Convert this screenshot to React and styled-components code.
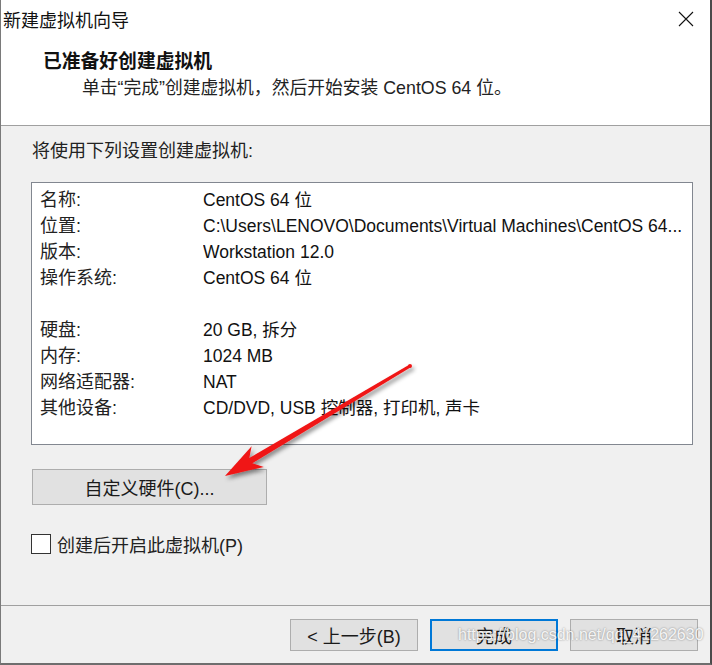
import React from 'react';
import styled, { createGlobalStyle } from 'styled-components';

const GlobalStyle = createGlobalStyle`
  html, body {
    margin: 0;
    padding: 0;
    background: #f0f0f0;
  }
  body {
    font-family: "Liberation Sans", "Noto Sans CJK SC", sans-serif;
    color: #1a1a1a;
  }
`;

const settings = [
  ['名称:', 'CentOS 64 位'],
  ['位置:', 'C:\\Users\\LENOVO\\Documents\\Virtual Machines\\CentOS 64...'],
  ['版本:', 'Workstation 12.0'],
  ['操作系统:', 'CentOS 64 位'],
  null,
  ['硬盘:', '20 GB, 拆分'],
  ['内存:', '1024 MB'],
  ['网络适配器:', 'NAT'],
  ['其他设备:', 'CD/DVD, USB 控制器, 打印机, 声卡'],
];

function RedArrow() {
  return (
    <StOverlay width="712" height="665" viewBox="0 0 712 665">
      <defs>
        <filter id="arrowShadow" x="-20%" y="-20%" width="140%" height="140%">
          <feDropShadow dx="2" dy="3" stdDeviation="2.2" floodColor="#000" floodOpacity="0.45" />
        </filter>
      </defs>
      <g filter="url(#arrowShadow)" fill="#f01515">
        <polygon points="409.2,364.7 249.3,458.1 251.6,446.3 225,476 263.8,466.9 252.3,463.3 410.8,367.3" />
        <circle cx="410" cy="366" r="2" />
      </g>
    </StOverlay>
  );
}

function App() {
  return (
    <>
      <GlobalStyle />
      <StWindow>
        <StTitleBar>
          <StTitle>新建虚拟机向导</StTitle>
          <StClose>
            <svg width="16" height="16" viewBox="0 0 16 16">
              <path d="M1 1L15 15M15 1L1 15" stroke="#111" strokeWidth="1.1" />
            </svg>
          </StClose>
        </StTitleBar>

        <StHeader>
          <StHeading>已准备好创建虚拟机</StHeading>
          <StSubtitle>单击“完成”创建虚拟机，然后开始安装 CentOS 64 位。</StSubtitle>
        </StHeader>

        <StBody>
          <StIntro>将使用下列设置创建虚拟机:</StIntro>
          <StListBox>
            {settings.map((row, i) =>
              row ? (
                <StRow key={i}>
                  <StLabel>{row[0]}</StLabel>
                  <StValue>{row[1]}</StValue>
                </StRow>
              ) : (
                <StRow key={i} />
              )
            )}
          </StListBox>

          <StCustomButton>自定义硬件(C)...</StCustomButton>

          <StCheckRow>
            <StCheckBox />
            <span>创建后开启此虚拟机(P)</span>
          </StCheckRow>
        </StBody>

        <StFooter>
          <StButton>&lt; 上一步(B)</StButton>
          <StButton $primary>完成</StButton>
          <StButton>取消</StButton>
        </StFooter>

        <RedArrow />
        <StWatermark>https://blog.csdn.net/qq_41262630</StWatermark>
      </StWindow>
    </>
  );
}

const StWindow = styled.div`
  position: relative;
  width: 712px;
  height: 665px;
  box-sizing: border-box;
  display: flex;
  flex-direction: column;
  background: #f0f0f0;
  border-left: 1px solid #7a7a7a;
  border-right: 2px solid #4a4a4a;
  border-bottom: 2px solid #6e6e6e;
  overflow: hidden;
`;

const StTitleBar = styled.div`
  height: 38px;
  display: flex;
  align-items: center;
  justify-content: space-between;
  padding: 0 16px 0 2px;
  background: #fff;
`;

const StTitle = styled.div`
  font-family: "Noto Sans CJK SC", sans-serif;
  font-size: 18px;
  color: #111;
`;

const StClose = styled.div`
  display: flex;
  align-items: center;
  svg {
    display: block;
  }
`;

const StHeader = styled.div`
  height: 88px;
  padding: 10px 0 0 42px;
  box-sizing: border-box;
  background: #fff;
  border-bottom: 1px solid #a0a0a0;
`;

const StHeading = styled.div`
  font-family: "Noto Sans CJK SC", sans-serif;
  font-size: 18.8px;
  font-weight: 700;
  line-height: 24px;
  color: #111;
`;

const StSubtitle = styled.div`
  margin: 4px 0 0 39px;
  font-size: 17.8px;
  line-height: 24px;
  color: #222;
`;

const StBody = styled.div`
  flex: 1;
  padding: 13px 17px 0 30px;
`;

const StIntro = styled.div`
  font-size: 18px;
  line-height: 24px;
  padding-left: 1px;
  color: #222;
`;

const StListBox = styled.div`
  margin-top: 19px;
  height: 263px;
  box-sizing: border-box;
  padding: 4px 8px 0 8px;
  background: #fff;
  border: 1px solid #828790;
`;

const StRow = styled.div`
  display: grid;
  grid-template-columns: 163px 1fr;
  height: 26px;
  line-height: 26px;
  white-space: nowrap;
`;

const StLabel = styled.span`
  font-size: 18px;
  color: #222;
`;

const StValue = styled.span`
  overflow: hidden;
  font-size: 17.5px;
  color: #111;
`;

const StCustomButton = styled.button`
  display: block;
  margin: 24px 0 0 1px;
  width: 235px;
  height: 36px;
  background: #e1e1e1;
  border: 1px solid #adadad;
  font-family: inherit;
  font-size: 18px;
  color: #1a1a1a;
  padding: 0;
`;

const StCheckRow = styled.label`
  display: flex;
  align-items: center;
  gap: 6px;
  margin-top: 26px;
  font-size: 18px;
  color: #222;
`;

const StCheckBox = styled.span`
  width: 20px;
  height: 20px;
  box-sizing: border-box;
  background: #fff;
  border: 1px solid #333;
`;

const StFooter = styled.div`
  display: flex;
  justify-content: flex-end;
  gap: 12px;
  padding: 13px 12px 12px 0;
  border-top: 1px solid #a0a0a0;
`;

const StButton = styled.button`
  width: 128px;
  height: 32px;
  box-sizing: border-box;
  padding: 0;
  background: #e1e1e1;
  border: ${(p) => (p.$primary ? '2px solid #0078d7' : '1px solid #adadad')};
  font-family: inherit;
  font-size: 18px;
  color: #1a1a1a;
`;

const StOverlay = styled.svg`
  position: absolute;
  left: -1px;
  top: 0;
  pointer-events: none;
`;

const StWatermark = styled.div`
  position: absolute;
  left: 457px;
  top: 626px;
  font-family: "Liberation Sans", sans-serif;
  font-size: 16px;
  color: rgba(255, 255, 255, 0.9);
  text-shadow: 0 0 2px rgba(0, 0, 0, 0.45);
  pointer-events: none;
  white-space: nowrap;
`;

export default App;
